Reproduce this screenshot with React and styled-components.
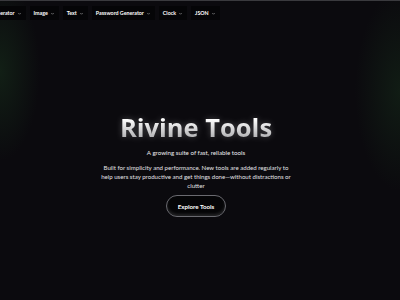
import React from 'react'
import styled, { createGlobalStyle } from 'styled-components'

const GlobalStyle = createGlobalStyle`
  html, body {
    margin: 0;
    padding: 0;
    background: #0b0a0e;
  }
  body {
    font-family: Lato, "Open Sans", sans-serif;
    color: #f2f2f2;
  }
`

const Page = styled.div`
  width: 400px;
  height: 300px;
  overflow: hidden;
  display: flex;
  flex-direction: column;
  border-top: 1px solid #3a3a3e;
  box-sizing: border-box;
  background:
    radial-gradient(ellipse 40px 90px at 0px 70px, rgba(30, 70, 35, 0.35), transparent),
    radial-gradient(ellipse 45px 100px at 400px 90px, rgba(30, 70, 35, 0.3), transparent),
    #0b0a0e;
`

const Nav = styled.nav`
  display: flex;
  align-items: center;
  gap: 4px;
  height: 24px;
  margin-left: -13.5px;
`

const NavItem = styled.div`
  display: flex;
  align-items: center;
  gap: 2px;
  padding: 4px 4px;
  background: #050507;
  font-size: 5.3px;
  font-weight: 700;
  color: #ffffff;
  white-space: nowrap;
`

const Chevron = () => (
  <svg width="5" height="5" viewBox="0 0 10 10">
    <path d="M2.5 4 L5 6.5 L7.5 4" fill="none" stroke="#aaa" strokeWidth="1.2" />
  </svg>
)

const Hero = styled.main`
  flex: 1;
  display: flex;
  flex-direction: column;
  align-items: center;
  padding: 86px 8px 0 0;
  text-align: center;
`

const Title = styled.h1`
  margin: 0;
  font-family: "Open Sans", sans-serif;
  font-size: 25.5px;
  font-weight: 700;
  line-height: 32px;
  background: linear-gradient(180deg, #ffffff 25%, #9c9c9f 100%);
  -webkit-background-clip: text;
  background-clip: text;
  color: transparent;
  filter: drop-shadow(0 0 3px rgba(255, 255, 255, 0.25));
`

const Tagline = styled.p`
  margin: 6px 0 0;
  font-size: 6.2px;
  color: #ececee;
`

const Blurb = styled.p`
  margin: 7px 0 0;
  width: 194px;
  font-size: 6.1px;
  line-height: 9px;
  color: #e2e2e6;
`

const ExploreButton = styled.button`
  margin-top: 5px;
  width: 60px;
  height: 22px;
  border-radius: 11px;
  border: 1px solid #6a6a70;
  background: #050507;
  color: #ffffff;
  font-family: inherit;
  font-size: 6.2px;
  font-weight: 700;
  box-shadow: inset 0 -2px 3px rgba(255, 255, 255, 0.12);
`

const navItems = ['Generator', 'Image', 'Text', 'Password Generator', 'Clock', 'JSON']

export default function App() {
  return (
    <>
      <GlobalStyle />
      <Page>
        <Nav>
          {navItems.map((n) => (
            <NavItem key={n}>
              {n}
              <Chevron />
            </NavItem>
          ))}
        </Nav>
        <Hero>
          <Title>Rivine Tools</Title>
          <Tagline>A growing suite of fast, reliable tools</Tagline>
          <Blurb>
            Built for simplicity and performance. New tools are added regularly to help users stay
            productive and get things done—without distractions or clutter
          </Blurb>
          <ExploreButton>Explore Tools</ExploreButton>
        </Hero>
      </Page>
    </>
  )
}
